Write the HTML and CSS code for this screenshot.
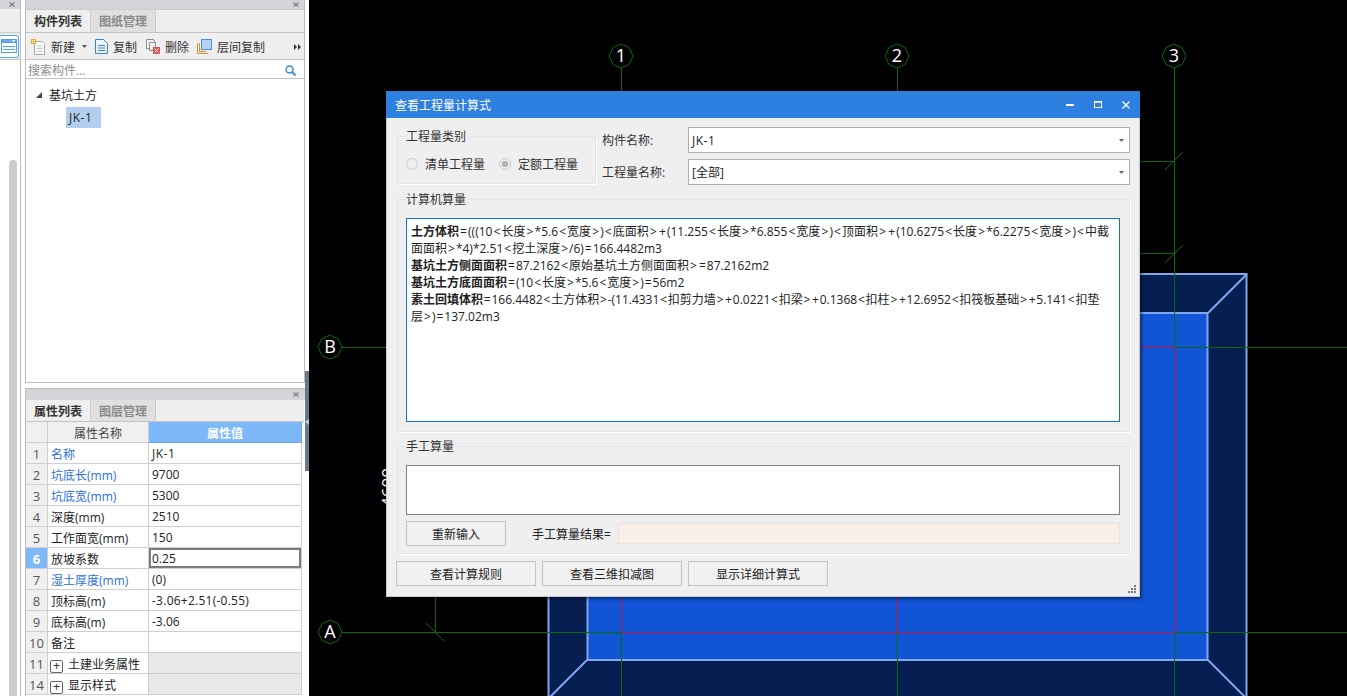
FILE: index.html
```html
<!DOCTYPE html>
<html lang="zh-CN">
<head>
<meta charset="utf-8">
<title>查看工程量计算式</title>
<link rel="stylesheet" href="styles.css">
</head>
<body>
<div class="app">
  <aside class="side">
    <div class="strip">
      <div class="dock-head"><svg class="x" width="6" height="5" viewBox="0 0 6 5"><path d="M.5.500l5 4M5.500.500l-5 4" stroke="#808080" stroke-width="1.300"/></svg></div>
      <div class="strip-tabs"></div>
      <div class="strip-tools">
        <span class="view-btn">
          <svg width="16" height="14" viewBox="0 0 16 14"><rect x="0.5" y="0.5" width="15" height="13" fill="#fff" stroke="#4fa0f0"/><rect x="0" y="0" width="16" height="4" fill="#4fa0f0"/><path d="M2 7.500h12M2 10.500h12" stroke="#4fa0f0"/><path d="M3 2h1M5.500 2h1M8 2h1M11 1.500h3l-1.500 1.500z" stroke="#fff" fill="#fff" stroke-width=".7"/></svg>
        </span>
      </div>
      <div class="scroll-thumb"></div>
    </div>
    <div class="panels">
      <section class="panel list-panel">
        <div class="dock-head"><svg class="x" width="6" height="5" viewBox="0 0 6 5"><path d="M.5.500l5 4M5.500.500l-5 4" stroke="#808080" stroke-width="1.300"/></svg></div>
        <div class="tabs">
          <span class="tab on">构件列表</span><span class="tab off">图纸管理</span>
        </div>
        <div class="toolbar">
          <span class="tool t-new">
            <svg width="15" height="16" viewBox="0 0 15 16"><path d="M3.500 2.500h8l2 2v11h-10z" fill="#fbfbfb" stroke="#a9a9a9"/><path d="M5.500 7h6M5.500 9.500h6M5.500 12h6" stroke="#c4c4c4"/><rect x="0" y="0" width="5" height="5" fill="#f6a623"/><path d="M1 1h1v1H1zM3 1h1v1H3zM2 2h1v1H2zM1 3h1v1H1zM3 3h1v1H3z" fill="#fff"/></svg>
            新建<svg class="caret" width="5" height="3" viewBox="0 0 5 3"><path d="M0 0h5L2.500 3z" fill="#555"/></svg>
          </span>
          <span class="tool t-copy">
            <svg width="13" height="15" viewBox="0 0 13 15"><path d="M.5.500h8l4 4v10H.5z" fill="#eef5fd" stroke="#3b7fc8"/><path d="M3 6.500h7M3 9h7M3 11.500h7" stroke="#3b7fc8"/></svg>
            复制
          </span>
          <span class="tool t-del">
            <svg width="14" height="15" viewBox="0 0 14 15"><path d="M.5.500h7l1 2v7H.5z" fill="#f4f4f4" stroke="#8b8b8b"/><path d="M3.500 3.500h6v8h-6z" fill="#f4f4f4" stroke="#8b8b8b"/><rect x="7" y="8" width="7" height="7" fill="#d9544f"/><path d="M8.500 9.500l4 4M12.500 9.500l-4 4" stroke="#fff"/></svg>
            删除
          </span>
          <span class="tool t-floor">
            <svg width="15" height="15" viewBox="0 0 15 15"><path d="M.5 4v10.500H11" fill="none" stroke="#ed8a2f"/><path d="M2.500 4v8.500H9" fill="none" stroke="#ed8a2f"/><rect x="4.500" y=".5" width="10" height="10" fill="#b5d3f5" stroke="#4f8fd8"/></svg>
            层间复制
          </span>
          <span class="more">
            <svg width="7" height="6" viewBox="0 0 7 6"><path d="M0 0l3 3-3 3zM4 0l3 3-3 3z" fill="#333"/></svg>
          </span>
        </div>
        <div class="search">
          <span class="search-hint">搜索构件...</span>
          <svg width="11" height="11" viewBox="0 0 11 11"><circle cx="4.500" cy="4.500" r="3.500" fill="none" stroke="#3d8fd0" stroke-width="1.500"/><path d="M7 7l3.500 3.500" stroke="#3d8fd0" stroke-width="2"/></svg>
        </div>
        <div class="tree">
          <div class="tree-root">
            <svg width="6" height="6" viewBox="0 0 6 6"><path d="M6 0v6H0z" fill="#444"/></svg>
            <span>基坑土方</span>
          </div>
          <div class="tree-leaf"><span class="wide">JK-1</span></div>
        </div>
      </section>
      <section class="panel prop-panel">
        <div class="dock-head"><svg class="x" width="6" height="5" viewBox="0 0 6 5"><path d="M.5.500l5 4M5.500.500l-5 4" stroke="#808080" stroke-width="1.300"/></svg></div>
        <div class="tabs">
          <span class="tab on">属性列表</span><span class="tab off">图层管理</span>
        </div>
        <table class="props">
          <colgroup><col class="c-no"><col class="c-name"><col class="c-val"></colgroup>
          <thead><tr><th class="no"></th><th class="head">属性名称</th><th class="head val-head">属性值</th></tr></thead>
          <tbody>
            <tr><td class="no">1</td><td class="link">名称</td><td><span class="wide">JK-1</span></td></tr>
            <tr><td class="no">2</td><td class="link">坑底长(mm)</td><td>9700</td></tr>
            <tr><td class="no">3</td><td class="link">坑底宽(mm)</td><td>5300</td></tr>
            <tr><td class="no">4</td><td>深度(mm)</td><td>2510</td></tr>
            <tr><td class="no">5</td><td>工作面宽(mm)</td><td>150</td></tr>
            <tr><td class="no cur">6</td><td>放坡系数</td><td class="sel">0.25</td></tr>
            <tr><td class="no">7</td><td class="link">湿土厚度(mm)</td><td>(0)</td></tr>
            <tr><td class="no">8</td><td>顶标高(m)</td><td><span class="semi">-3.06+2.51(-0.55)</span></td></tr>
            <tr><td class="no">9</td><td>底标高(m)</td><td>-3.06</td></tr>
            <tr><td class="no">10</td><td>备注</td><td></td></tr>
            <tr class="grp"><td class="no">11</td><td><span class="plus">+</span>土建业务属性</td><td class="grey"></td></tr>
            <tr class="grp"><td class="no">14</td><td><span class="plus">+</span>显示样式</td><td class="grey"></td></tr>
          </tbody>
        </table>
      </section>
    </div>
    <div class="splitter"><svg width="4" height="6" viewBox="0 0 4 6"><path d="M4 0v6L0 3z" fill="#c9ced4"/></svg></div>
  </aside>

  <main class="canvas">
    <svg class="cad" width="1038" height="696" viewBox="309 0 1038 696">
      <rect x="548.500" y="274" width="698" height="440" fill="#061e50" stroke="#7fa6ee" stroke-width="2"/>
      <rect x="587.500" y="313" width="620" height="347" fill="#1154d6" stroke="#7fa6ee" stroke-width="2"/>
      <path d="M587 660l-39 39M1208 660l39 39M1208 313l39-39" stroke="#7fa6ee" stroke-width="2" fill="none"/>
      <g class="axis">
        <path d="M621.500 68V92M621.500 632V696M897.500 68V92M897.500 632V696M1174.500 68V347M1174.500 632V696M342 347.500H387M1174 347.500H1347M342 632.500H621M1174 632.500H1347M435.500 597V632M1140 161.500H1174M1140 253.500H1174"/>
        <path d="M1165 170l18-18M1165 263l18-18M426 623l18 18"/>
      </g>
      <path class="axis-red" d="M621.500 597V632M897.500 597V632M1174.500 347V632M621 632.500H1174M1140 347.500H1174"/>
      <g class="bubble">
        <polygon points="621,44 629,47.500 633,56 629,64.500 621,68 613,64.500 609,56 613,47.500"/>
        <polygon points="897,44 905,47.500 909,56 905,64.500 897,68 889,64.500 885,56 889,47.500"/>
        <polygon points="1174,44 1182,47.500 1186,56 1182,64.500 1174,68 1166,64.500 1162,56 1166,47.500"/>
        <polygon points="330,335 338,338.500 342,347 338,355.500 330,359 322,355.500 318,347 322,338.500"/>
        <polygon points="330,620 338,623.500 342,632 338,640.500 330,644 322,640.500 318,632 322,623.500"/>
      </g>
      <g class="axis-text">
        <text x="621" y="62">1</text>
        <text x="897" y="62">2</text>
        <text x="1174" y="62">3</text>
        <text x="330" y="353">B</text>
        <text x="330" y="638">A</text>
      </g>
      <text class="dim" transform="translate(394 507) rotate(-90)">4600</text>
    </svg>
  </main>

  <div class="dialog">
    <header class="titlebar">
      <span>查看工程量计算式</span>
      <span class="win-btns">
        <svg width="8" height="2" viewBox="0 0 8 2"><rect width="8" height="2" fill="#fff"/></svg>
        <svg width="8" height="7" viewBox="0 0 8 7"><rect x=".5" y="1" width="7" height="5.500" fill="none" stroke="#fff"/><rect width="8" height="1.500" fill="#fff"/></svg>
        <svg width="8" height="8" viewBox="0 0 8 8"><path d="M.5.500l7 7M7.500.500l-7 7" stroke="#fff" stroke-width="1.300"/></svg>
      </span>
    </header>
    <div class="dlg-body">
      <div class="top-row">
        <fieldset class="group kind">
          <legend>工程量类别</legend>
          <label class="radio"><i class="dot"></i>清单工程量</label>
          <label class="radio"><i class="dot checked"></i>定额工程量</label>
        </fieldset>
        <div class="fields">
          <div class="field"><span class="f-label">构件名称:</span><span class="combo"><span class="wide">JK-1</span><svg width="5" height="3" viewBox="0 0 5 3"><path d="M0 0h5L2.500 3z" fill="#666"/></svg></span></div>
          <div class="field"><span class="f-label">工程量名称:</span><span class="combo">[全部]<svg width="5" height="3" viewBox="0 0 5 3"><path d="M0 0h5L2.500 3z" fill="#666"/></svg></span></div>
        </div>
      </div>
      <fieldset class="group calc">
        <legend>计算机算量</legend>
        <div class="formula">
          <div class="line-a"><b>土方体积</b><i>=</i>(((10<i>&lt;</i>长度<i>&gt;</i>*5.6<i>&lt;</i>宽度<i>&gt;</i>)<i>&lt;</i>底面积<i>&gt;</i><i>+</i>(11.255<i>&lt;</i>长度<i>&gt;</i>*6.855<i>&lt;</i>宽度<i>&gt;</i>)<i>&lt;</i>顶面积<i>&gt;</i><i>+</i>(10.6275<i>&lt;</i>长度<i>&gt;</i>*6.2275<i>&lt;</i>宽度<i>&gt;</i>)<i>&lt;</i>中截</div>
          <div>面面积<i>&gt;</i>*4)*2.51<i>&lt;</i>挖土深度<i>&gt;</i>/6)<i>=</i>166.4482m3</div>
          <div><b>基坑土方侧面面积</b><i>=</i>87.2162<i>&lt;</i>原始基坑土方侧面面积<i>&gt;</i><i>=</i>87.2162m2</div>
          <div><b>基坑土方底面面积</b><i>=</i>(10<i>&lt;</i>长度<i>&gt;</i>*5.6<i>&lt;</i>宽度<i>&gt;</i>)<i>=</i>56m2</div>
          <div class="line-b"><b>素土回填体积</b><i>=</i>166.4482<i>&lt;</i>土方体积<i>&gt;</i>-(11.4331<i>&lt;</i>扣剪力墙<i>&gt;</i><i>+</i>0.0221<i>&lt;</i>扣梁<i>&gt;</i><i>+</i>0.1368<i>&lt;</i>扣柱<i>&gt;</i><i>+</i>12.6952<i>&lt;</i>扣筏板基础<i>&gt;</i><i>+</i>5.141<i>&lt;</i>扣垫</div>
          <div>层<i>&gt;</i>)<i>=</i>137.02m3</div>
        </div>
      </fieldset>
      <fieldset class="group manual">
        <legend>手工算量</legend>
        <div class="manual-input"></div>
        <div class="manual-row">
          <button class="btn redo" type="button">重新输入</button>
          <span class="result-label">手工算量结果=</span>
          <span class="result"></span>
        </div>
      </fieldset>
      <div class="actions">
        <button class="btn act" type="button">查看计算规则</button>
        <button class="btn act" type="button">查看三维扣减图</button>
        <button class="btn act" type="button">显示详细计算式</button>
      </div>
    </div>
    <svg class="grip" width="8" height="8" viewBox="0 0 8 8"><path d="M6 0h2v2H6zM3 3h2v2H3zM6 3h2v2H6zM0 6h2v2H0zM3 6h2v2H3zM6 6h2v2H6z" fill="#6f7680"/></svg>
  </div>
</div>
</body>
</html>
```
FILE: styles.css
```css
* { box-sizing: border-box; }
html, body { margin: 0; height: 100%; overflow: hidden; }
body {
  font-family: "Open Sans", "Noto Sans CJK SC", sans-serif;
  font-size: 12px;
  color: #222;
  background: #000;
}
.app { display: flex; width: 1347px; height: 696px; position: relative; }
.wide { letter-spacing: .5px; }
.semi { letter-spacing: .25px; }

/* left dock */
.side { width: 309px; flex: none; display: flex; background: #fff; }
.strip { width: 21px; flex: none; border-right: 1px solid #bdbdbd; position: relative; overflow: hidden; }
.dock-head {
  height: 9px; background: #d3d5da; display: flex; justify-content: flex-end; align-items: center;
  padding-right: 5px;
}
.x { display: block; }
.strip-tabs { height: 24px; background: #efefef; border-bottom: 1px solid #ccc; }
.strip-tools { height: 27px; background: #efefef; border-bottom: 1px solid #c4c4c4; display: flex; align-items: center; }
.view-btn {
  width: 19px; height: 23px; background: #fff; border: 1px solid #5aa8f2; border-left: 0;
  border-radius: 0 3px 3px 0; display: flex; align-items: center; justify-content: flex-end; padding-right: 1px;
}
.scroll-thumb { position: absolute; left: 9px; top: 160px; bottom: 0; width: 8px; background: #ccc; border-radius: 4px 4px 0 0; }
.panels { width: 280px; margin-left: 4px; flex: none; display: flex; flex-direction: column; gap: 5px; }
.panel { border: solid #bdbdbd; border-width: 0 1px; background: #fff; }
.list-panel { height: 383px; border-bottom: 1px solid #bdbdbd; }
.prop-panel { flex: 1; border-top: 1px solid #bdbdbd; border-right: 0; overflow: hidden; }
.prop-panel .dock-head { height: 11px; padding-right: 6px; }
.tabs { height: 24px; display: flex; background: #efefef; border-top: 1px solid #ccc; border-bottom: 1px solid #c4c4c4; }
.prop-panel .tabs { height: 22px; width: 278px; border-top: 0; }
.tab { height: 100%; display: flex; align-items: center; font-weight: 700; padding: 0 8px; }
.tab.on { width: 64px; color: #333; }
.tab.off { width: 66px; background: #dfdfdf; color: #8a8a8a; border: solid #ccc; border-width: 0 1px; }
.toolbar { height: 27px; background: #efefef; border-bottom: 1px solid #c4c4c4; display: flex; align-items: center; padding-top: 1px; font-size: 12px; color: #333; }
.tool { display: flex; align-items: center; gap: 5px; }
.t-new { margin-left: 5px; }
.caret { margin-left: 2px; }
.t-copy { margin-left: 8px; }
.t-del { margin-left: 9px; }
.t-floor { margin-left: 8px; }
.more { margin-left: auto; margin-right: 3px; display: flex; }
.search { height: 19px; display: flex; align-items: center; justify-content: space-between; padding: 2px 8px 0 2px; border-bottom: 1px solid #c4c4c4; }
.search-hint { color: #8c8c8c; }
.tree { padding-top: 6px; }
.tree-root { display: flex; align-items: center; gap: 7px; padding-left: 10px; height: 20px; color: #222; }
.tree-leaf { margin: 2px 0 0 40px; width: 35px; height: 21px; line-height: 21px; background: #b3cfef; padding-left: 3px; color: #222; }

/* property table */
.props { border-collapse: separate; border-spacing: 0; table-layout: fixed; width: 276px; }
.c-no { width: 22px; } .c-name { width: 101px; } .c-val { width: 153px; }
.props th, .props td {
  height: 21px; padding: 1px 3px 0; font-weight: 400; font-size: 12px; text-align: left; white-space: nowrap;
  border-right: 1px solid #cfcfcf; border-bottom: 1px solid #cfcfcf; color: #222;
}
.props .no { background: #f0f0f0; text-align: center; color: #555; font-size: 13px; padding: 1px 0 0; }
.props .head { background: #f0f0f0; text-align: center; color: #444; }
.props .val-head { background: #7db8f8; color: #fff; font-weight: 700; border-color: #6aa8ea; }
.props .link { color: #2a6fe0; }
.props .no.cur { background: #7db8f8; color: #fff; font-weight: 700; }
.props .sel { box-shadow: inset 0 0 0 2px #7c7c7c; }
.props .grey { background: #e8e8e8; }
.plus {
  display: inline-block; width: 13px; height: 13px; line-height: 11px; border: 1px solid #666; border-radius: 2px;
  text-align: center; font-size: 12px; margin: 0 5px 0 -1px; vertical-align: -1px; color: #333;
  font-family: "Liberation Sans", sans-serif;
}
.splitter { width: 4px; height: 100px; margin-top: 371px; background: #6c7886; display: flex; align-items: flex-start; padding-top: 48px; flex: none; }

/* CAD canvas */
.canvas { flex: 1; background: #000; min-width: 0; }
.cad { display: block; }
.axis { stroke: #0a6a0a; stroke-width: 1; fill: none; }
.axis-red { stroke: #c0143c; stroke-width: 1; fill: none; }
.bubble polygon { fill: #000; stroke: #0a6a0a; stroke-width: 1; }
.axis-text text { fill: #fff; font: 18px "Open Sans", sans-serif; text-anchor: middle; }
.dim { fill: #fff; font: 17px "Open Sans", sans-serif; }

/* dialog */
.dialog {
  position: absolute; left: 386px; top: 91px; width: 754px; height: 506px;
  background: #efefef; border: 1px solid #c3cad6; border-top: 0;
  box-shadow: 2px 2px 3px rgba(0, 0, 0, .45);
}
.titlebar {
  height: 27px; margin: 0 -1px; background: #2d7fe0; color: #fff; display: flex; align-items: center;
  justify-content: space-between; padding-left: 9px;
}
.win-btns { display: flex; align-items: center; gap: 20px; padding-right: 10px; }
.dlg-body { padding: 9px 9px 0 10px; }
.top-row { display: flex; height: 66px; }
.group { margin: 0; padding: 0; border: 1px solid #e4e4e4; box-shadow: 1px 1px 0 #fff; position: relative; min-width: 0; }
.group legend {
  position: absolute; top: -7px; left: 0; padding: 0 2px 0 0; margin-left: 8px;
  line-height: 14px; height: 14px; color: #333; background: #efefef;
}
.kind { width: 199px; height: 48px; margin-top: 9px; display: flex; gap: 14px; padding: 8px 0 0 8px; align-items: center; }
.radio { display: flex; align-items: center; gap: 7px; color: #333; }
.dot { width: 12px; height: 12px; border-radius: 50%; border: 1px solid #c8c8c8; background: #efefef; display: block; }
.dot.checked { background: radial-gradient(circle, #b5b5b5 0 3px, #efefef 3.500px); }
.fields { margin-left: 6px; display: flex; flex-direction: column; gap: 6px; }
.field { display: flex; align-items: center; height: 26px; }
.f-label { width: 86px; color: #333; }
.combo {
  width: 442px; height: 26px; background: #fff; border: 1px solid #b0b0b0; display: flex; align-items: center;
  justify-content: space-between; padding: 0 5px 0 3px; color: #222;
}
.calc { width: 733px; height: 233px; margin-top: 6px; padding: 0 8px; }
.formula {
  margin-top: 18px; width: 714px; height: 204px; background: #fff; border: 1px solid #0a78d0;
  padding: 4px 4px; line-height: 17px; white-space: nowrap; color: #222;
}
.formula b { font-weight: 700; }
.formula i { font-style: normal; margin: 0 1px; }
.formula .line-a i { margin: 0 1.100px; }
.formula .line-b i { margin: 0 .800px; }
.manual { width: 733px; height: 108px; margin-top: 14px; padding: 18px 8px 0; }
.manual-input { width: 714px; height: 50px; background: #fff; border: 1px solid #808080; }
.manual-row { display: flex; align-items: center; margin-top: 6px; height: 25px; }
.btn {
  font: inherit; color: #222; background: #f0f0f0; border: 1px solid #c4c4c4; padding: 0; height: 25px;
}
.redo { width: 100px; }
.result-label { margin-left: 26px; width: 86px; color: #222; }
.result { width: 502px; height: 21px; background: #f9efe6; border: 1px solid #ebe4dc; }
.actions { display: flex; gap: 6px; margin-top: 7px; margin-left: -1px; }
.act { width: 140px; }
.grip { position: absolute; right: 3px; bottom: 3px; }
```
